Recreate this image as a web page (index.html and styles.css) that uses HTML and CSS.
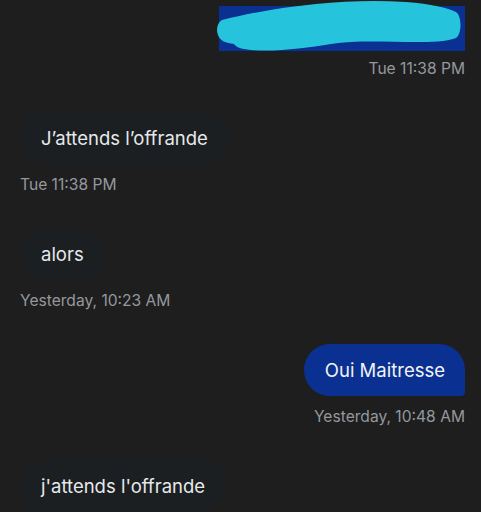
FILE: index.html
```html
<!DOCTYPE html>
<html lang="fr">
<head>
    <meta charset="UTF-8">
    <meta name="viewport" content="width=device-width, initial-scale=1.0">
    <title>Messages</title>
    <link rel="stylesheet" href="styles.css">
</head>
<body>
    <div class="chat">
        <div class="msg sent">
            <div class="bubble hidden-bubble">
                <svg class="scribble" width="250" height="54" viewBox="0 0 250 54">
                    <path d="M6 20 C30 14 60 8 100 4 C130 1 160 0 190 2 C215 4 232 8 240 12 C246 16 246 34 240 38 C230 42 215 42 200 42 C170 42 140 40 115 44 C90 48 60 52 35 50 C24 49 20 47 18 44 C10 43 4 41 2 35 C0 30 1 23 6 20 Z" fill="#26c4dc"/>
                </svg>
            </div>
            <div class="time">Tue 11:38 PM</div>
        </div>

        <div class="msg received">
            <div class="bubble">J’attends l’offrande</div>
            <div class="time">Tue 11:38 PM</div>
        </div>

        <div class="msg received">
            <div class="bubble">alors</div>
            <div class="time">Yesterday, 10:23 AM</div>
        </div>

        <div class="msg sent">
            <div class="bubble">Oui Maitresse</div>
            <div class="time">Yesterday, 10:48 AM</div>
        </div>

        <div class="msg received">
            <div class="bubble">j'attends l'offrande</div>
        </div>
    </div>
</body>
</html>
```

FILE: styles.css
```css
body {
    margin: 0;
    background: #1e1e1f;
    font-family: 'Inter', 'Liberation Sans', sans-serif;
    color: #e7e9ea;
    overflow: hidden;
}

.chat {
    display: flex;
    flex-direction: column;
    padding: 6px 16px 0 20px;
}

.msg {
    display: flex;
    flex-direction: column;
    margin-bottom: 34px;
}

.msg.sent {
    align-items: flex-end;
}

.msg.received {
    align-items: flex-start;
}

.bubble {
    font-size: 18.5px;
    line-height: 22px;
    padding: 15px 21px;
    border-radius: 26px;
    background: #1b1f22;
}

.sent .bubble {
    background: #0a3191;
    color: #f2f4f5;
    padding-right: 20px;
    border-bottom-right-radius: 4px;
}

.sent .hidden-bubble {
    width: 246px;
    height: 45px;
    padding: 0;
    border-radius: 0;
    margin-bottom: -3px;
    position: relative;
}

.scribble {
    position: absolute;
    left: -3px;
    top: -6px;
}

.time {
    font-size: 15.6px;
    line-height: 19px;
    color: #94989c;
    margin-top: 11px;
}
```
